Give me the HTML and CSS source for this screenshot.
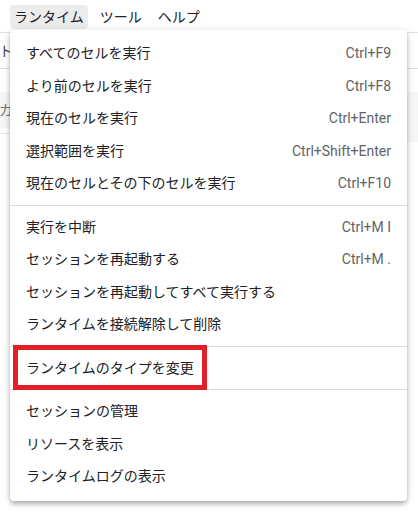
FILE: index.html
```html
<!DOCTYPE html>
<html lang="ja">
<head>
<meta charset="utf-8">
<title>ランタイム</title>
<link rel="stylesheet" href="styles.css">
</head>
<body>
<div class="page">
  <nav class="menubar">
    <span class="menubar-item is-open">ランタイム</span>
    <span class="menubar-item">ツール</span>
    <span class="menubar-item">ヘルプ</span>
  </nav>
  <div class="toolbar"><span class="toolbar-text">ト</span></div>
  <div class="spacer"></div>
  <div class="strip">
    <div class="strip-left"><span class="strip-text">カ</span></div>
    <div class="strip-right"></div>
  </div>

  <div class="menu">
    <div class="menu-group">
      <div class="menu-item"><span class="label">すべてのセルを実行</span><span class="shortcut">Ctrl+F9</span></div>
      <div class="menu-item"><span class="label">より前のセルを実行</span><span class="shortcut">Ctrl+F8</span></div>
      <div class="menu-item"><span class="label">現在のセルを実行</span><span class="shortcut">Ctrl+Enter</span></div>
      <div class="menu-item"><span class="label">選択範囲を実行</span><span class="shortcut">Ctrl+Shift+Enter</span></div>
      <div class="menu-item"><span class="label">現在のセルとその下のセルを実行</span><span class="shortcut">Ctrl+F10</span></div>
    </div>
    <div class="separator"></div>
    <div class="menu-group">
      <div class="menu-item"><span class="label">実行を中断</span><span class="shortcut">Ctrl+M I</span></div>
      <div class="menu-item"><span class="label">セッションを再起動する</span><span class="shortcut">Ctrl+M .</span></div>
      <div class="menu-item"><span class="label">セッションを再起動してすべて実行する</span></div>
      <div class="menu-item"><span class="label">ランタイムを接続解除して削除</span></div>
    </div>
    <div class="separator"></div>
    <div class="menu-group">
      <div class="menu-item is-marked"><span class="label">ランタイムのタイプを変更</span><span class="mark"></span></div>
    </div>
    <div class="separator"></div>
    <div class="menu-group">
      <div class="menu-item"><span class="label">セッションの管理</span></div>
      <div class="menu-item"><span class="label">リソースを表示</span></div>
      <div class="menu-item"><span class="label">ランタイムログの表示</span></div>
    </div>
  </div>
</div>
</body>
</html>
```

FILE: styles.css
```css
html, body {
  margin: 0;
  padding: 0;
  background: #ffffff;
}

body {
  font-family: Roboto, "Noto Sans CJK JP", sans-serif;
  font-size: 14px;
  color: #212121;
}

.page {
  position: relative;
  width: 418px;
  height: 518px;
  overflow: hidden;
}

/* menubar */
.menubar {
  display: flex;
  gap: 8px;
  height: 32px;
  padding: 5px 0 0 10px;
  box-sizing: border-box;
}

.menubar-item {
  height: 24px;
  line-height: 24px;
  padding: 0 4px;
  border-radius: 4px;
  color: #202124;
}

.menubar-item.is-open {
  background: #ececec;
}

/* background content (mostly hidden under the menu) */
.toolbar {
  height: 35px;
  border-top: 1px solid #e0e0e0;
  border-bottom: 1px solid #e0e0e0;
  display: flex;
  align-items: center;
}

.toolbar-text {
  color: #444;
  margin-left: -1px;
  line-height: 20px;
}

.spacer {
  height: 23px;
}

.strip {
  display: flex;
  align-items: flex-start;
}

.strip-left {
  width: 200px;
  height: 41px;
  border-bottom: 1px solid #e6e6e6;
  background: linear-gradient(#f6f6f6 36px, #ffffff 36px);
}

.strip-text {
  display: block;
  height: 36px;
  line-height: 36px;
  color: #777;
  margin-left: -1px;
}

.strip-right {
  flex: 1;
  height: 50px;
  background: #f6f6f6;
}

/* dropdown menu */
.menu {
  position: absolute;
  left: 10px;
  top: 30px;
  width: 397px;
  padding: 7px 0 8px;
  box-sizing: border-box;
  background: #ffffff;
  border-radius: 4px;
  box-shadow: 0 2px 4px -1px rgba(0, 0, 0, 0.2),
              0 4px 5px 0 rgba(0, 0, 0, 0.14),
              0 1px 10px 0 rgba(0, 0, 0, 0.12);
}

.menu-item {
  display: flex;
  justify-content: space-between;
  align-items: center;
  height: 32.5px;
  padding: 0 16px;
  white-space: nowrap;
}

.label {
  color: #202124;
  line-height: 20px;
}

.shortcut {
  color: #5f6368;
  line-height: 20px;
}

.separator {
  height: 1px;
  margin: 5px 0;
  background: #dadce0;
}

.menu-item.is-marked {
  position: relative;
}

.mark {
  position: absolute;
  left: 3px;
  top: -6.5px;
  width: 194px;
  height: 45px;
  box-sizing: border-box;
  border: 5px solid #e31e26;
}
```
